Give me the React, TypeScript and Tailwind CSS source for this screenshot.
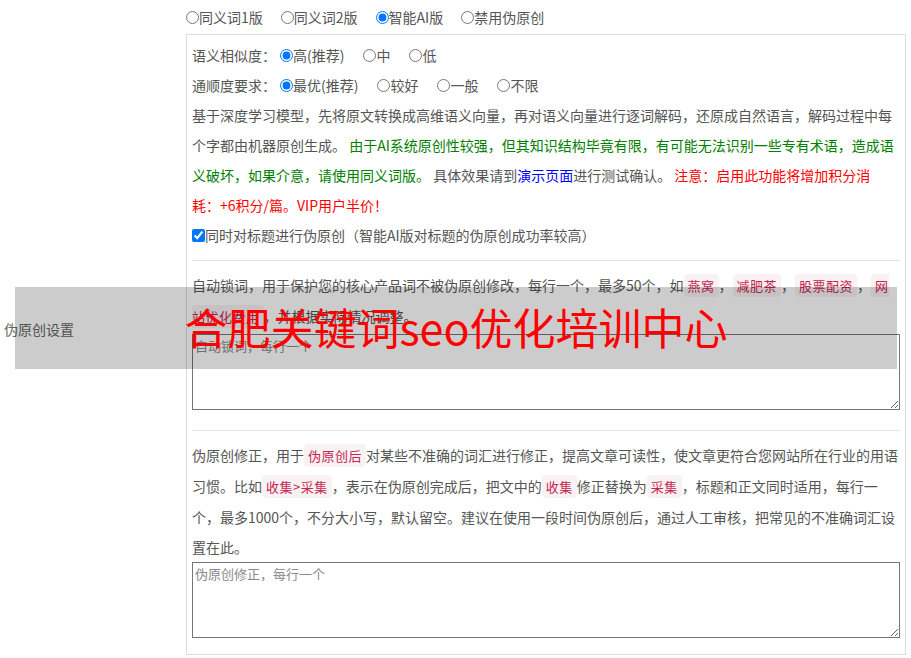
import React from "react";

const Code = ({ children }: { children: React.ReactNode }) => (
  <code className="bg-[#f9f2f4] text-[#c7254e] px-[4px] py-[2px] rounded-[4px] text-[13px] tracking-[0.5px] font-['Microsoft_YaHei','Noto_Sans_CJK_SC',sans-serif]">
    {children}
  </code>
);

const Radio = ({ label, checked, name }: { label: string; checked?: boolean; name: string }) => (
  <label className="inline-flex items-center">
    <input type="radio" name={name} defaultChecked={checked} className="m-0 ml-[4px] w-[13px] h-[13px]" />
    <span>{label}</span>
  </label>
);

export default function App() {
  return (
    <div className="relative w-[911px] h-[658px] bg-white text-[14px] text-[#555] font-['Microsoft_YaHei','Noto_Sans_CJK_SC',sans-serif] flex">
      <div className="w-[186px] shrink-0 flex items-center pl-[4px] pt-[1px] text-[#666]">伪原创设置</div>
      <div className="w-[720px] shrink-0 flex flex-col">
        <div className="h-[34px] flex items-center gap-[18px] leading-[30px]">
          <label className="inline-flex items-center"><input type="radio" name="ver" className="m-0 w-[13px] h-[13px]" /><span>同义词1版</span></label>
          <label className="inline-flex items-center"><input type="radio" name="ver" className="m-0 w-[13px] h-[13px]" /><span>同义词2版</span></label>
          <label className="inline-flex items-center"><input type="radio" name="ver" defaultChecked className="m-0 w-[13px] h-[13px]" /><span>智能AI版</span></label>
          <label className="inline-flex items-center"><input type="radio" name="ver" className="m-0 w-[13px] h-[13px]" /><span>禁用伪原创</span></label>
        </div>
        <div className="border border-[#ddd] pt-[5px] pb-[16px] pl-[5px] pr-[5px] leading-[30px]">
          <div className="flex items-center gap-[15px] h-[30px]">
            <span className="-mr-[15px]">语义相似度：</span>
            <Radio name="sim" label="高(推荐)" checked />
            <Radio name="sim" label="中" />
            <Radio name="sim" label="低" />
          </div>
          <div className="flex items-center gap-[15px] h-[30px]">
            <span className="-mr-[15px]">通顺度要求：</span>
            <Radio name="flu" label="最优(推荐)" checked />
            <Radio name="flu" label="较好" />
            <Radio name="flu" label="一般" />
            <Radio name="flu" label="不限" />
          </div>
          <p className="pr-[4px]">
            基于深度学习模型，先将原文转换成高维语义向量，再对语义向量进行逐词解码，还原成自然语言，解码过程中每个字都由机器原创生成。
            <span className="text-[#008000]"> 由于AI系统原创性较强，但其知识结构毕竟有限，有可能无法识别一些专有术语，造成语义破坏，如果介意，请使用同义词版。</span>
            {" "}具体效果请到<span className="text-[#0000ff]">演示页面</span>进行测试确认。
            <span className="text-[#ff0000]"> 注意：启用此功能将增加积分消耗：+6积分/篇。VIP用户半价！</span>
          </p>
          <label className="flex items-center h-[30px]">
            <input type="checkbox" defaultChecked className="m-0 w-[13px] h-[13px]" />
            <span>同时对标题进行伪原创（智能AI版对标题的伪原创成功率较高）</span>
          </label>
          <div className="border-t border-[#e5e5e5] mt-[10px] mb-[9px]" />
          <p>
            自动锁词，用于保护您的核心产品词不被伪原创修改，每行一个，最多50个，如<Code>燕窝</Code>，<Code>减肥茶</Code>，<Code>股票配资</Code>，<Code>网站优化费用</Code>，并根据实际情况调整。
          </p>
          <textarea
            placeholder="自动锁词，每行一个"
            className="block mt-[2px] w-full h-[76px] border border-[#767676] p-[2px] text-[13px] leading-[18px] placeholder:text-[#8a8a8a] font-['Microsoft_YaHei','Noto_Sans_CJK_SC',sans-serif]"
          />
          <div className="border-t border-[#e5e5e5] mt-[20px] mb-[9px]" />
          <p>
            伪原创修正，用于<Code>伪原创后</Code>对某些不准确的词汇进行修正，提高文章可读性，使文章更符合您网站所在行业的用语习惯。比如<Code>收集&gt;采集</Code>，表示在伪原创完成后，把文中的<Code>收集</Code>修正替换为<Code>采集</Code>，标题和正文同时适用，每行一个，最多1000个，不分大小写，默认留空。建议在使用一段时间伪原创后，通过人工审核，把常见的不准确词汇设置在此。
          </p>
          <textarea
            placeholder="伪原创修正，每行一个"
            className="block mt-0 w-full h-[76px] border border-[#767676] p-[2px] text-[13px] leading-[18px] placeholder:text-[#8a8a8a] font-['Microsoft_YaHei','Noto_Sans_CJK_SC',sans-serif]"
          />
        </div>
      </div>
      <div className="absolute left-[15px] top-[287px] w-[882px] h-[82px] bg-[rgba(0,0,0,0.2)] flex items-center justify-center pb-[4px] text-[#ff0000] text-[43px] leading-[78px] font-['Microsoft_YaHei','Noto_Sans_CJK_SC',sans-serif]">
        合肥关键词seo优化培训中心
      </div>
    </div>
  );
}
